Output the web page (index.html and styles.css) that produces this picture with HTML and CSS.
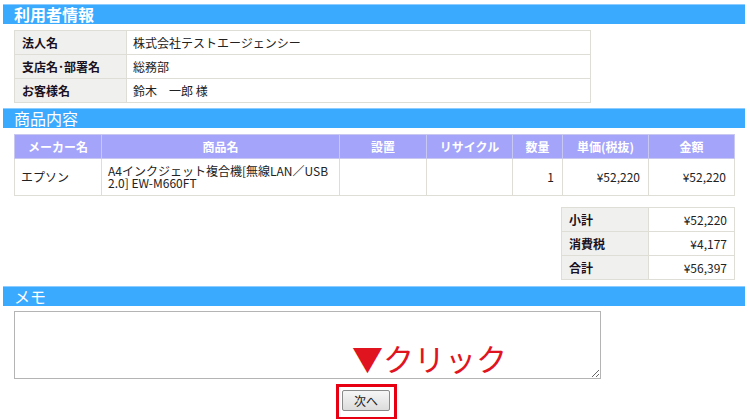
FILE: index.html
```html
<!DOCTYPE html>
<html lang="ja">
<head>
    <meta charset="UTF-8">
    <meta name="viewport" content="width=device-width, initial-scale=1.0">
    <title>ご注文内容の確認</title>
    <link rel="stylesheet" href="styles.css">
</head>
<body>

    <div class="page">
        <h2 class="section-title bold">利用者情報</h2>
        <table class="info-table">
            <tr>
                <th>法人名</th>
                <td>株式会社テストエージェンシー</td>
            </tr>
            <tr>
                <th>支店名･部署名</th>
                <td>総務部</td>
            </tr>
            <tr>
                <th>お客様名</th>
                <td>鈴木　一郎 様</td>
            </tr>
        </table>

        <h2 class="section-title">商品内容</h2>
        <table class="item-table">
            <tr>
                <th class="c-maker">メーカー名</th>
                <th class="c-name">商品名</th>
                <th class="c-setup">設置</th>
                <th class="c-recycle">リサイクル</th>
                <th class="c-qty">数量</th>
                <th class="c-price">単価(税抜)</th>
                <th class="c-total">金額</th>
            </tr>
            <tr>
                <td>エプソン</td>
                <td class="name">A4インクジェット複合機[無線LAN／USB 2.0] EW-M660FT</td>
                <td></td>
                <td></td>
                <td class="num">1</td>
                <td class="num">¥52,220</td>
                <td class="num">¥52,220</td>
            </tr>
        </table>

        <table class="sum-table">
            <tr>
                <th>小計</th>
                <td>¥52,220</td>
            </tr>
            <tr>
                <th>消費税</th>
                <td>¥4,177</td>
            </tr>
            <tr>
                <th>合計</th>
                <td>¥56,397</td>
            </tr>
        </table>

        <h2 class="section-title">メモ</h2>
        <textarea class="memo" name="memo"></textarea>

        <div class="actions">
            <span class="click-note">▼クリック</span>
            <div class="highlight">
                <button type="button" class="next-btn">次へ</button>
            </div>
        </div>
    </div>

</body>
</html>
```

FILE: styles.css
```css
body {
    font-family: "Noto Sans CJK JP", "Liberation Sans", sans-serif;
    font-size: 12px;
    color: #222;
    background-color: #fff;
    margin: 0;
    padding: 0;
}
.page {
    padding: 4px 5px 0 3px;
}
.section-title {
    margin: 0;
    height: 20px;
    line-height: 19px;
    padding-left: 11px;
    background-color: #3aaaff;
    border-top: 1px solid #8cccff;
    box-sizing: border-box;
    color: #fff;
    font-size: 16px;
    font-weight: normal;
}
.section-title.bold {
    font-weight: bold;
}
table {
    border-collapse: collapse;
    margin-left: 11px;
}
th, td {
    border: 1px solid #deded6;
    padding: 0 6px;
    line-height: 14px;
}
.info-table {
    width: 577px;
    margin-top: 6px;
    margin-bottom: 5px;
}
.info-table tr {
    height: 24px;
}
.info-table th {
    width: 98px;
    text-align: left;
    padding-left: 7px;
    background-color: #f0f0ee;
    color: #1a1020;
}
.item-table {
    width: 721px;
    margin-top: 6px;
}
.item-table th {
    height: 23px;
    background-color: #a4a4fa;
    border-color: #c8c8f0;
    color: #fff;
    text-align: center;
}
.item-table td {
    height: 36px;
}
.item-table .name {
    line-height: 12px;
}
.c-maker { width: 74px; }
.c-name { width: 225px; }
.c-setup { width: 74px; }
.c-recycle { width: 73px; }
.c-qty { width: 37px; }
.c-price { width: 73px; }
.c-total { width: 73px; }
.num {
    text-align: right;
    padding-right: 8px;
}
.sum-table {
    width: 174px;
    margin: 11px 0 6px 558px;
}
.sum-table tr {
    height: 24px;
}
.sum-table th {
    width: 73px;
    text-align: left;
    padding-left: 7px;
    background-color: #f0f0ee;
    color: #1a1020;
}
.sum-table td {
    text-align: right;
    padding-right: 7px;
}
.memo {
    display: block;
    width: 587px;
    height: 68px;
    margin: 5px 0 0 11px;
    border: 1px solid #b4b4b4;
    box-sizing: border-box;
}
.actions {
    position: relative;
    padding: 5px 0 0 333px;
}
.highlight {
    display: inline-block;
    border: 3px solid #e60012;
    padding: 3px 4px 6px 3px;
}
.next-btn {
    font-family: "Noto Sans CJK JP", sans-serif;
    font-size: 12px;
    width: 48px;
    height: 21px;
    padding: 0;
    color: #222;
    background: linear-gradient(#f6f6f6, #dcdcdc);
    border: 1px solid #8a8a8a;
    border-radius: 2px;
}
.click-note {
    position: absolute;
    left: 349px;
    top: -39px;
    font-size: 31px;
    line-height: 36px;
    color: #e0141e;
    white-space: nowrap;
}
```
